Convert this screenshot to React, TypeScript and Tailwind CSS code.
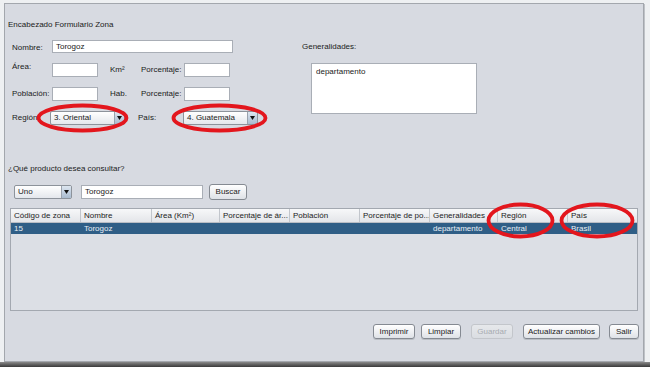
import React from "react";

const FONT = "font-['Liberation_Sans',Arial,sans-serif]";

function Input({ w, h = 14, value = "" }: { w: number; h?: number; value?: string }) {
  return (
    <div
      className="shrink-0 bg-white border border-[#a9aeb6] flex items-center pl-[3px] text-[#1a1a1a] text-[8px] leading-none"
      style={{ width: w, height: h }}
    >
      {value}
    </div>
  );
}

function Combo({ w, value }: { w: number; value: string }) {
  return (
    <div
      className="shrink-0 h-[14px] border border-[#8d939b] rounded-[2px] flex items-stretch bg-gradient-to-b from-[#ffffff] to-[#e4e7ec] overflow-hidden"
      style={{ width: w }}
    >
      <div className="flex-1 flex items-center pl-[3px] text-[8px] leading-none text-[#1a1a1a]">{value}</div>
      <div className="w-[10px] border-l border-[#9aa2ad] bg-gradient-to-b from-[#dde6f0] to-[#a9bbcf] flex items-center justify-center">
        <svg width="5" height="4" viewBox="0 0 5 4">
          <path d="M0 0 L5 0 L2.5 4 Z" fill="#111" />
        </svg>
      </div>
    </div>
  );
}

function Btn({ w, label, disabled = false }: { w: number; label: string; disabled?: boolean }) {
  return (
    <div
      className={
        "shrink-0 h-[15px] rounded-[3px] border flex items-center justify-center text-[8px] leading-none bg-gradient-to-b " +
        (disabled
          ? "border-[#c3c6cb] from-[#e6e8eb] to-[#dadde2] text-[#a7abb1]"
          : "border-[#858a92] from-[#ffffff] to-[#dfe2e7] text-[#1a1a1a] shadow-[0_1px_0_#b9bdc3]")
      }
      style={{ width: w }}
    >
      {label}
    </div>
  );
}

const cols: { label: string; w: number }[] = [
  { label: "Código de zona", w: 70 },
  { label: "Nombre", w: 71 },
  { label: "Área (Km²)", w: 68 },
  { label: "Porcentaje de ár...", w: 70 },
  { label: "Población", w: 70 },
  { label: "Porcentaje de po...", w: 70 },
  { label: "Generalidades", w: 68 },
  { label: "Región", w: 70 },
  { label: "País", w: 69 },
];

const row = ["15", "Torogoz", "", "", "", "", "departamento", "Central", "Brasil"];

function Ellipse({ x, y, w, h }: { x: number; y: number; w: number; h: number }) {
  return (
    <svg className="absolute pointer-events-none" style={{ left: x, top: y }} width={w} height={h}>
      <ellipse cx={w / 2} cy={h / 2} rx={w / 2 - 2.5} ry={h / 2 - 2.5} fill="none" stroke="#e3161d" strokeWidth="3.8" />
    </svg>
  );
}

export default function App() {
  return (
    <div className={"relative w-[650px] h-[367px] bg-[#eef0f2] flex flex-col overflow-hidden " + FONT}>
      <div className="mt-[3px] ml-[4px] w-[640px] h-[359px] border border-[#a3a7ad] bg-[#d7dae1] flex flex-col shrink-0 shadow-[1px_1px_0_#bfc2c7]">
        {/* Title */}
        <div className="mt-[16px] pl-[3px] h-[10px] text-[8px] leading-[10px] text-[#1a1a1a]">Encabezado Formulario Zona</div>

        {/* Form */}
        <div className="mt-[10px] flex">
          <div className="w-[297px] pl-[7px] flex flex-col text-[8px] text-[#1a1a1a]">
            <div className="h-[13px] flex items-center">
              <div className="w-[40px] pt-[3px]">Nombre:</div>
              <Input w={181} h={13} value="Torogoz" />
            </div>
            <div className="mt-[10px] h-[14px] flex items-center">
              <div className="w-[40px] self-start -mt-[2px]">Área:</div>
              <Input w={46} />
              <div className="ml-[12px] w-[31px]">Km²</div>
              <div className="w-[43px]">Porcentaje:</div>
              <Input w={46} />
            </div>
            <div className="mt-[10px] h-[14px] flex items-center">
              <div className="w-[40px]">Población:</div>
              <Input w={46} />
              <div className="ml-[12px] w-[31px]">Hab.</div>
              <div className="w-[43px]">Porcentaje:</div>
              <Input w={46} />
            </div>
            <div className="mt-[10px] h-[14px] flex items-center">
              <div className="w-[38px]">Región:</div>
              <Combo w={75} value="3. Oriental" />
              <div className="ml-[13px] w-[45px]">País:</div>
              <Combo w={75} value="4. Guatemala" />
            </div>
          </div>
          <div className="flex flex-col text-[8px] text-[#1a1a1a]">
            <div className="h-[13px] flex items-center">Generalidades:</div>
            <div className="mt-[10px] ml-[9px] w-[166px] h-[51px] bg-white border border-[#a9aeb6] px-[4px] pt-[3px] leading-[10px]">
              departamento
            </div>
          </div>
        </div>

        {/* Question */}
        <div className="mt-[39px] pl-[3px] h-[10px] text-[8px] leading-[10px] text-[#1a1a1a]">¿Qué producto desea consultar?</div>

        {/* Search row */}
        <div className="mt-[10px] h-[16px] pl-[9px] flex items-center">
          <Combo w={58} value="Uno" />
          <div className="ml-[9px]">
            <Input w={122} value="Torogoz" />
          </div>
          <div className="ml-[6px]">
            <div className="w-[38px] h-[16px] rounded-[3px] border border-[#858a92] bg-gradient-to-b from-white to-[#dfe2e7] flex items-center justify-center text-[8px] leading-none text-[#1a1a1a]">
              Buscar
            </div>
          </div>
        </div>

        {/* Table */}
        <div className="mt-[8px] ml-[5px] w-[628px] h-[103px] border border-[#a3a8b0] bg-[#dcdfe5] flex flex-col">
          <div className="h-[14px] flex bg-gradient-to-b from-[#f7f8f9] to-[#e3e5e9] border-b border-[#b9bdc4]">
            {cols.map((c, i) => (
              <div
                key={i}
                className={"shrink-0 flex items-center pl-[3px] text-[8px] leading-none text-[#222] whitespace-nowrap overflow-hidden " + (i < cols.length - 1 ? "border-r border-[#c2c6cc]" : "")}
                style={{ width: c.w }}
              >
                {c.label}
              </div>
            ))}
          </div>
          <div className="h-[11px] flex bg-[#2f5e86]">
            {row.map((v, i) => (
              <div
                key={i}
                className="shrink-0 flex items-center pl-[3px] text-[8px] leading-none text-[#e8eef5] whitespace-nowrap"
                style={{ width: cols[i].w }}
              >
                {v}
              </div>
            ))}
          </div>
        </div>

        {/* Buttons */}
        <div className="mt-[13px] pr-[4px] flex justify-end items-center">
          <Btn w={42} label="Imprimir" />
          <div className="ml-[6px]"><Btn w={40} label="Limpiar" /></div>
          <div className="ml-[10px]"><Btn w={42} label="Guardar" disabled /></div>
          <div className="ml-[10px]"><Btn w={77} label="Actualizar cambios" /></div>
          <div className="ml-[9px]"><Btn w={30} label="Salir" /></div>
        </div>
      </div>
      <div className="flex-1 bg-gradient-to-b from-[#8a8a8a] to-[#3a3a3a]" />

      <Ellipse x={36} y={103} w={93} h={30} />
      <Ellipse x={171} y={103} w={97} h={30} />
      <Ellipse x={486} y={202} w={69} h={37} />
      <Ellipse x={559} y={202} w={76} h={37} />
    </div>
  );
}
